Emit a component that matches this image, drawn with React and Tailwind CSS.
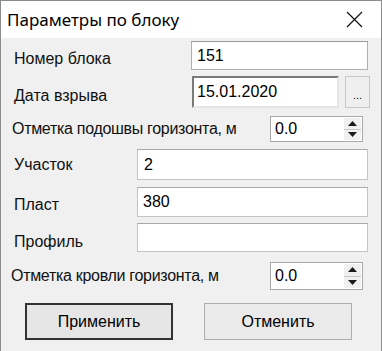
import React from 'react';

const font = { fontFamily: '"Liberation Sans", Arial, sans-serif' };

function Spin({ value }) {
  return (
    <div className="flex w-[93px] h-full border border-[#a9a9a9] bg-white">
      <div className="flex-1 flex items-center pl-[4px] text-[16px] text-black">{value}</div>
      <div className="flex flex-col w-[17px] my-[1px] mr-[1px]">
        <div className="flex-1 flex items-center justify-center bg-[#f0f0f0] border-b border-[#c8c8c8]">
          <svg width="9" height="5" viewBox="0 0 9 5"><path d="M0 5 L4.5 0 L9 5 Z" fill="#1a1a1a" /></svg>
        </div>
        <div className="flex-1 flex items-center justify-center bg-[#f0f0f0]">
          <svg width="9" height="5" viewBox="0 0 9 5"><path d="M0 0 L4.5 5 L9 0 Z" fill="#1a1a1a" /></svg>
        </div>
      </div>
    </div>
  );
}

export default function App() {
  return (
    <div className="w-[382px] h-[351px] flex flex-col border-l border-r border-t border-[#8c8c8c] bg-[#f0f0f0] text-[#111]" style={font}>
      {/* title bar */}
      <div className="h-[37px] shrink-0 bg-white flex items-center justify-between pl-[6px] pr-[18px]">
        <span className="text-[17px] text-black" style={{ fontFamily: '"Noto Sans", "Open Sans", sans-serif' }}>Параметры по блоку</span>
        <svg width="17" height="17" viewBox="0 0 17 17"><path d="M1 1 L16 16 M16 1 L1 16" stroke="#111" strokeWidth="1.2" /></svg>
      </div>

      <div className="flex flex-col text-[16px]">
        {/* Номер блока */}
        <div className="flex items-center h-[29px] mt-[3px]">
          <span className="w-[190px] pl-[13px] pt-[7px]">Номер блока</span>
          <div className="w-[177px] h-full border border-[#b0b0b0] border-t-[#9a9a9a] bg-white flex items-center pl-[5px] text-black">151</div>
        </div>

        {/* Дата взрыва */}
        <div className="flex items-center h-[32px] mt-[6px]">
          <span className="w-[191px] pl-[13px] pt-[8px]">Дата взрыва</span>
          <div className="w-[147px] h-full border-2 border-t-[#7a7a7a] border-l-[#7a7a7a] border-b-[#e6e6e6] border-r-[#e6e6e6] bg-white flex items-center pl-[3px] text-black">15.01.2020</div>
          <div className="ml-[6px] w-[25px] h-full border border-[#c8c8c8] bg-[#efefef] flex items-end justify-center pb-[6px] text-[11px] leading-none">...</div>
        </div>

        {/* Отметка подошвы */}
        <div className="flex items-center h-[26px] mt-[8px]">
          <span className="w-[269px] pl-[11px] tracking-[-0.3px]">Отметка подошвы горизонта, м</span>
          <Spin value="0.0" />
        </div>

        {/* Участок */}
        <div className="flex items-center h-[31px] mt-[7px]">
          <span className="w-[136px] pl-[13px]">Участок</span>
          <div className="w-[231px] h-full border border-[#c4c4c4] border-t-[#a8a8a8] bg-white flex items-center pl-[6px] text-black">2</div>
        </div>

        {/* Пласт */}
        <div className="flex items-center h-[30px] mt-[7px]">
          <span className="w-[136px] pl-[13px] pt-[6px]">Пласт</span>
          <div className="w-[231px] h-full border border-[#c4c4c4] border-t-[#a8a8a8] bg-white flex items-center pl-[5px] text-black">380</div>
        </div>

        {/* Профиль */}
        <div className="flex items-center h-[29px] mt-[6px]">
          <span className="w-[136px] pl-[13px] pt-[8px]">Профиль</span>
          <div className="w-[231px] h-full border border-[#c4c4c4] border-t-[#a8a8a8] bg-white"></div>
        </div>

        {/* Отметка кровли */}
        <div className="flex items-center h-[28px] mt-[10px]">
          <span className="w-[269px] pl-[10px] tracking-[-0.3px]">Отметка кровли горизонта, м</span>
          <Spin value="0.0" />
        </div>

        {/* buttons */}
        <div className="flex items-center h-[37px] mt-[13px] pl-[24px]">
          <button className="w-[148px] h-full border-2 border-[#333] bg-[#e6e6e6] text-[16px] text-black">Применить</button>
          <button className="ml-[31px] w-[148px] h-full border border-[#adadad] bg-[#eaeaea] text-[16px] text-black">Отменить</button>
        </div>
      </div>
    </div>
  );
}
